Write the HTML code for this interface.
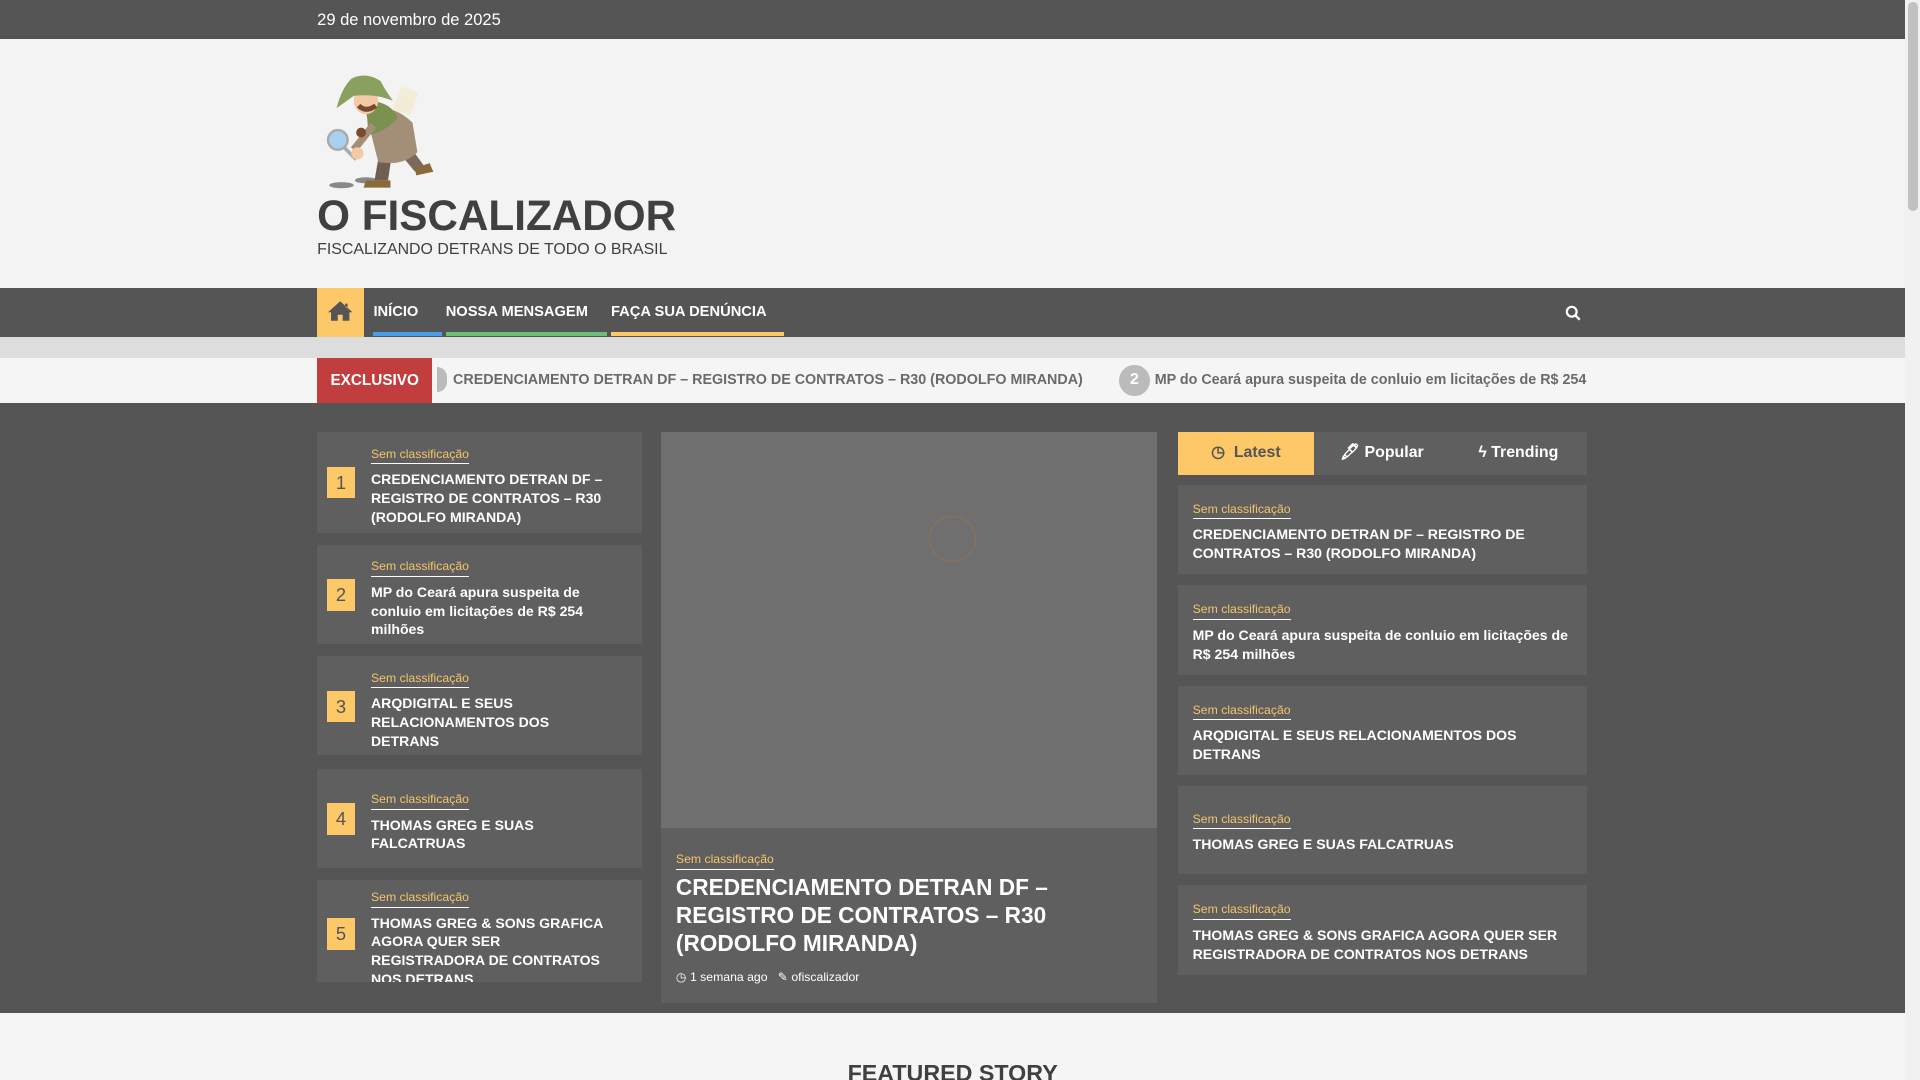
<!DOCTYPE html>
<html><head><meta charset="utf-8"><style>
*{margin:0;padding:0;box-sizing:border-box}
html,body{width:1920px;height:1080px;overflow:hidden;background:#f5f5f5}
#w{zoom:1.22449;width:1568px;height:882px;position:relative;font-family:"Liberation Sans",Arial,sans-serif;background:#f5f5f5;overflow:hidden}
.a{position:absolute}
.top{left:0;top:0;width:1556px;height:32px;background:#555}
.hdr{left:0;top:32px;width:1556px;height:203px;background:#f3f3f3}
.nav{left:0;top:235px;width:1556px;height:40px;background:#555}
.band{left:0;top:275px;width:1556px;height:17px;background:#ddd}
.tick{left:0;top:292px;width:1556px;height:37px;background:#f5f5f5}
.main{left:0;top:329px;width:1556px;height:498px;background:#555}
.sb{left:1556px;top:0;width:12px;height:882px;background:#f1f1f1}
.nv{color:#fff;font-weight:bold;font-size:12px;top:248px}
.card{background:#5f5f5f}
.cat{color:#f5c46a;font-size:10px;border-bottom:1px solid #fff;padding-bottom:2px;display:inline-block}
.tt{color:#fff;font-weight:bold;font-size:11.5px;line-height:15.3px}
.num{left:8px;width:23px;height:26px;background:#fdc867;color:#555;font-size:15px;text-align:center;line-height:26px}
</style></head><body><div id="w">
<div class="a top"></div>
<div class="a" style="left:259px;top:8px;color:#fff;font-size:13.5px">29 de novembro de 2025</div>
<div class="a hdr"></div>
<svg class="a" style="left:259px;top:52px" width="108" height="104" viewBox="0 0 108 104">
<ellipse cx="20" cy="99" rx="10" ry="2.5" fill="#888"/><ellipse cx="40" cy="95" rx="9" ry="2.5" fill="#888"/>
<path d="M52 66 L47 95 L58 95 L62 68Z" fill="#6e5f52"/><path d="M62 66 L80 88 L88 84 L72 62Z" fill="#7a6a5c"/>
<path d="M40 95 h20 v6 h-22z" fill="#8a6a3a"/><path d="M80 85 l12 -4 l3 7 l-14 3z" fill="#8a6a3a"/>
<path d="M40 40 Q60 30 78 48 L82 72 Q70 84 50 80 Z" fill="#a38e78"/>
<path d="M40 30 Q60 30 66 44 Q55 56 42 58 Z" fill="#7b9150"/>
<ellipse cx="40" cy="30" rx="10" ry="11" fill="#f4c9a8"/><path d="M34 34 q6 6 14 0" stroke="#7a4a2e" stroke-width="4" fill="none"/>
<path d="M16 36 Q20 20 28 12 Q40 6 52 14 Q56 22 62 30 Q48 24 30 26 Z" fill="#8aa060"/>
<rect x="65" y="20" width="15" height="20" fill="#f3ecd6" transform="rotate(20 72 30)"/>
<path d="M46 50 L30 70" stroke="#a38e78" stroke-width="6"/>
<circle cx="17" cy="62" r="8" fill="#a8d0f0" stroke="#aaa" stroke-width="2"/><path d="M22 68 L32 78" stroke="#aaa" stroke-width="3"/>
<circle cx="33" cy="73" r="5" fill="#f4c9a8"/><circle cx="36" cy="56" r="4" fill="#7a4a2e"/>
</svg>
<div class="a" style="left:259px;top:157px;font-size:34.5px;font-weight:bold;color:#404040">O FISCALIZADOR</div>
<div class="a" style="left:259px;top:197px;font-size:13px;color:#404040">FISCALIZANDO DETRANS DE TODO O BRASIL</div>
<div class="a nav"></div>
<div class="a" style="left:259px;top:235px;width:38px;height:40px;background:#fdc867"></div>
<svg class="a" style="left:268px;top:245px" width="20" height="18" viewBox="0 0 20 18"><path d="M10 1 L0 10 L2.5 10 L2.5 17 L8 17 L8 12 L12 12 L12 17 L17.5 17 L17.5 10 L20 10 Z M14 3 h2 v4 l-2 -2z" fill="#555"/></svg>
<div class="a nv" style="left:305px">INÍCIO</div>
<div class="a nv" style="left:364px">NOSSA MENSAGEM</div>
<div class="a nv" style="left:499px">FAÇA SUA DENÚNCIA</div>
<div class="a" style="left:305px;top:271px;width:56px;height:3px;background:#4a9de8"></div>
<div class="a" style="left:364px;top:271px;width:132px;height:3px;background:#6cbf76"></div>
<div class="a" style="left:499px;top:271px;width:141px;height:3px;background:#fdc867"></div>
<svg class="a" style="left:1278px;top:249px" width="13" height="13" viewBox="0 0 13 13"><circle cx="5.5" cy="5.5" r="4" stroke="#fff" stroke-width="1.8" fill="none"/><path d="M8.5 8.5 L12 12" stroke="#fff" stroke-width="2"/></svg>
<div class="a band"></div>
<div class="a tick"></div>
<div class="a" style="left:259px;top:292px;width:94px;height:37px;background:#c23d3d;color:#fff;font-weight:bold;font-size:12.5px;text-align:center;line-height:37px">EXCLUSIVO</div>
<div class="a" style="left:357px;top:300px;width:8px;height:20px;background:#bbb;border-radius:0 10px 10px 0"></div>
<div class="a" style="left:370px;top:304px;color:#6a6a6a;font-weight:bold;font-size:11.7px;white-space:nowrap">CREDENCIAMENTO DETRAN DF – REGISTRO DE CONTRATOS – R30 (RODOLFO MIRANDA)</div>
<div class="a" style="left:914px;top:298px;width:25px;height:25px;border-radius:50%;background:#bbb;color:#fff;font-weight:bold;font-size:13px;text-align:center;line-height:25px">2</div>
<div class="a" style="left:943px;top:304px;width:355px;overflow:hidden;color:#6a6a6a;font-weight:bold;font-size:11.7px;white-space:nowrap">MP do Ceará apura suspeita de conluio em licitações de R$ 254 milhões</div>
<div class="a main"></div>
<div class="a card" style="left:259px;top:353px;width:265px;height:82px"><div class="a num" style="top:28px">1</div><div class="a" style="left:44px;top:7px;width:200px"><span class="cat">Sem classificação</span><div class="tt" style="margin-top:5px">CREDENCIAMENTO DETRAN DF – REGISTRO DE CONTRATOS – R30 (RODOLFO MIRANDA)</div></div></div>
<div class="a card" style="left:259px;top:445px;width:265px;height:81px"><div class="a num" style="top:28px">2</div><div class="a" style="left:44px;top:7px;width:200px"><span class="cat">Sem classificação</span><div class="tt" style="margin-top:5px">MP do Ceará apura suspeita de conluio em licitações de R$ 254 milhões</div></div></div>
<div class="a card" style="left:259px;top:536px;width:265px;height:81px"><div class="a num" style="top:28px">3</div><div class="a" style="left:44px;top:7px;width:200px"><span class="cat">Sem classificação</span><div class="tt" style="margin-top:5px">ARQDIGITAL E SEUS RELACIONAMENTOS DOS DETRANS</div></div></div>
<div class="a card" style="left:259px;top:628px;width:265px;height:81px"><div class="a num" style="top:28px">4</div><div class="a" style="left:44px;top:14px;width:200px"><span class="cat">Sem classificação</span><div class="tt" style="margin-top:5px">THOMAS GREG E SUAS FALCATRUAS</div></div></div>
<div class="a card" style="left:259px;top:719px;width:265px;height:83px;overflow:hidden"><div class="a num" style="top:31px">5</div><div class="a" style="left:44px;top:3px;width:200px"><span class="cat">Sem classificação</span><div class="tt" style="margin-top:5px">THOMAS GREG &amp; SONS GRAFICA AGORA QUER SER REGISTRADORA DE CONTRATOS NOS DETRANS</div></div></div>
<div class="a" style="left:540px;top:353px;width:405px;height:323px;background:#6f6f6f"></div>
<div class="a" style="left:759px;top:421px;width:38px;height:38px;border-radius:50%;border:1.5px solid #8a7552"></div>
<div class="a" style="left:540px;top:676px;width:405px;height:143px;background:#5f5f5f"></div>
<div class="a" style="left:552px;top:691px"><span class="cat">Sem classificação</span></div>
<div class="a" style="left:552px;top:713px;width:330px;color:#fff;font-weight:bold;font-size:18.5px;line-height:23px">CREDENCIAMENTO DETRAN DF – REGISTRO DE CONTRATOS – R30 (RODOLFO MIRANDA)</div>
<div class="a" style="left:552px;top:792px;color:#fff;font-size:10px">◷ 1 semana ago &nbsp; ✎ ofiscalizador</div>
<div class="a" style="left:962px;top:353px;width:334px;height:35px;background:#5f5f5f"></div>
<div class="a" style="left:962px;top:353px;width:111px;height:35px;background:#fdc867;color:#555;font-weight:bold;font-size:13px;text-align:center;line-height:35px">◷&nbsp; Latest</div>
<div class="a" style="left:1073px;top:353px;width:111px;height:35px;color:#fff;font-weight:bold;font-size:13px;text-align:center;line-height:35px">🖋 Popular</div>
<div class="a" style="left:1184px;top:353px;width:112px;height:35px;color:#fff;font-weight:bold;font-size:13px;text-align:center;line-height:35px">ϟ Trending</div>
<div class="a card" style="left:962px;top:396px;width:334px;height:73px"><div class="a" style="left:12px;top:9px;width:315px"><span class="cat">Sem classificação</span><div class="tt" style="margin-top:5px">CREDENCIAMENTO DETRAN DF – REGISTRO DE CONTRATOS – R30 (RODOLFO MIRANDA)</div></div></div>
<div class="a card" style="left:962px;top:478px;width:334px;height:73px"><div class="a" style="left:12px;top:9px;width:315px"><span class="cat">Sem classificação</span><div class="tt" style="margin-top:5px">MP do Ceará apura suspeita de conluio em licitações de R$ 254 milhões</div></div></div>
<div class="a card" style="left:962px;top:560px;width:334px;height:73px"><div class="a" style="left:12px;top:9px;width:315px"><span class="cat">Sem classificação</span><div class="tt" style="margin-top:5px">ARQDIGITAL E SEUS RELACIONAMENTOS DOS DETRANS</div></div></div>
<div class="a card" style="left:962px;top:642px;width:334px;height:72px"><div class="a" style="left:12px;top:16px;width:315px"><span class="cat">Sem classificação</span><div class="tt" style="margin-top:5px">THOMAS GREG E SUAS FALCATRUAS</div></div></div>
<div class="a card" style="left:962px;top:723px;width:334px;height:73px"><div class="a" style="left:12px;top:9px;width:315px"><span class="cat">Sem classificação</span><div class="tt" style="margin-top:5px">THOMAS GREG &amp; SONS GRAFICA AGORA QUER SER REGISTRADORA DE CONTRATOS NOS DETRANS</div></div></div>
<div class="a" style="left:0;top:866px;width:1556px;text-align:center;color:#404040;font-weight:bold;font-size:19px">FEATURED STORY</div>
<div class="a sb"></div>
<div class="a" style="left:1558px;top:2px;width:8px;height:170px;background:#c1c1c1;border-radius:4px"></div>
</div></body></html>
